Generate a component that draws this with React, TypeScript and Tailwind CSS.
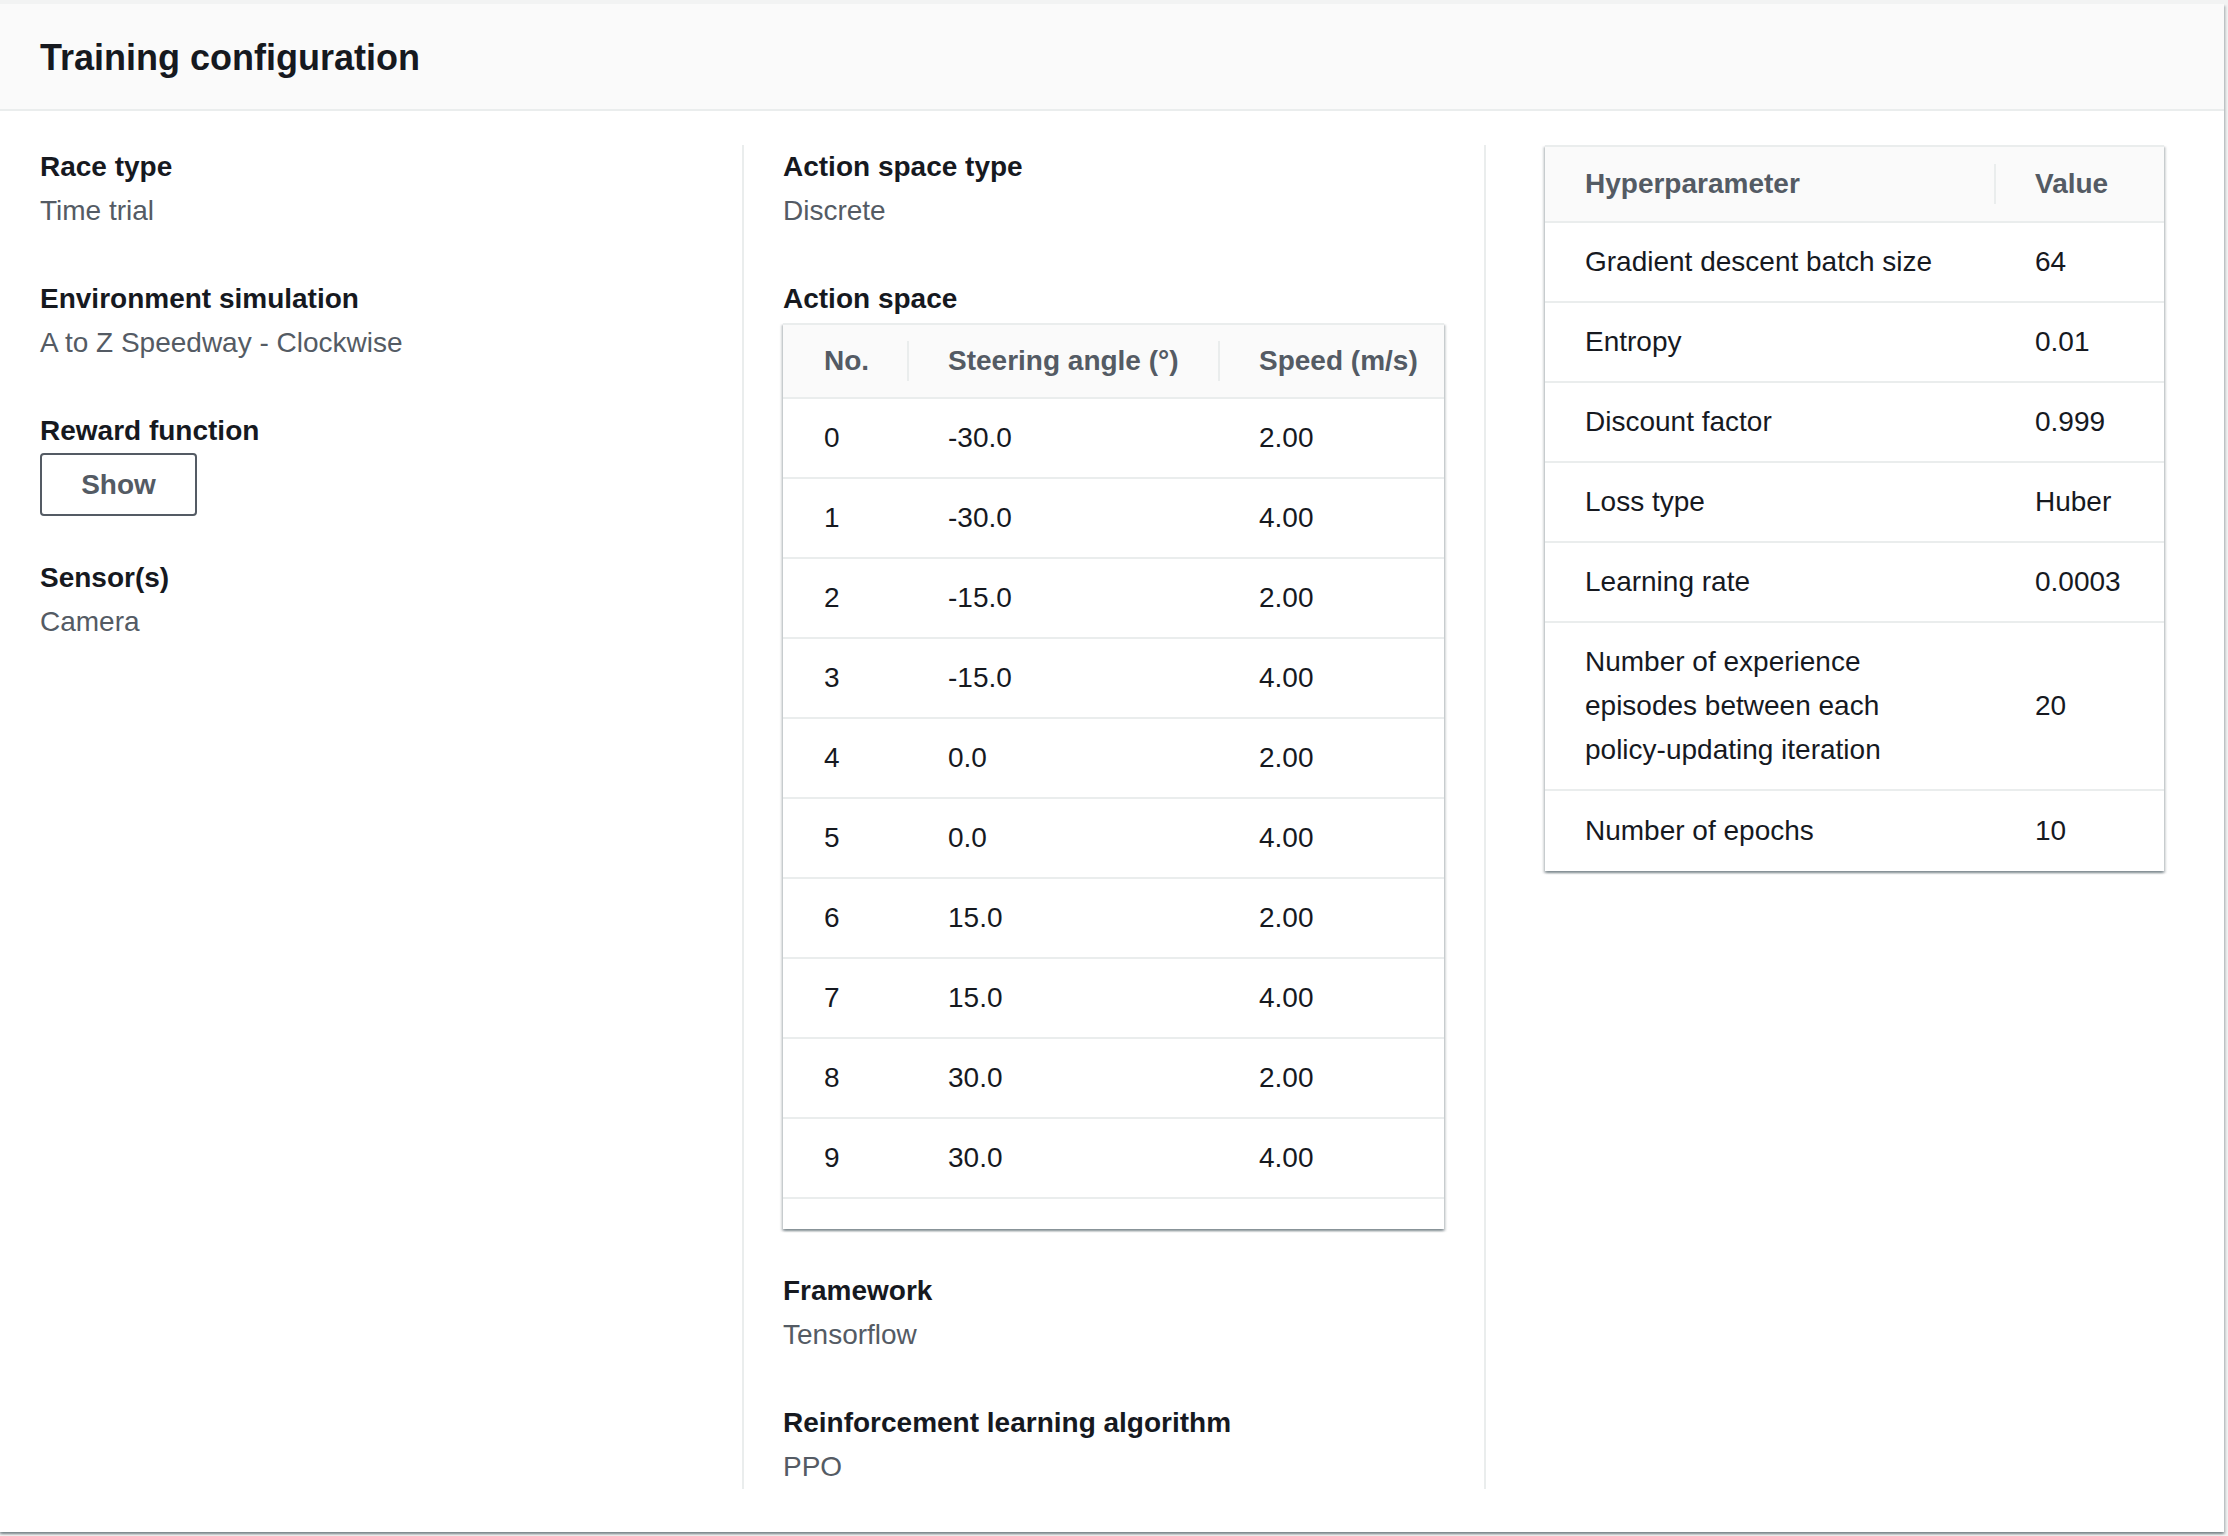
import React from 'react';

const FONT = { fontFamily: '"Liberation Sans", Arial, sans-serif' };

const actions = [
  ['0', '-30.0', '2.00'],
  ['1', '-30.0', '4.00'],
  ['2', '-15.0', '2.00'],
  ['3', '-15.0', '4.00'],
  ['4', '0.0', '2.00'],
  ['5', '0.0', '4.00'],
  ['6', '15.0', '2.00'],
  ['7', '15.0', '4.00'],
  ['8', '30.0', '2.00'],
  ['9', '30.0', '4.00'],
];

const hyper = [
  ['Gradient descent batch size', '64'],
  ['Entropy', '0.01'],
  ['Discount factor', '0.999'],
  ['Loss type', 'Huber'],
  ['Learning rate', '0.0003'],
  ['Number of experience episodes between each policy-updating iteration', '20'],
  ['Number of epochs', '10'],
];

const tableShadow =
  'border-t-2 border-[#eaeded] bg-white shadow-[0_2px_2px_0_rgba(0,28,36,0.3),2px_2px_2px_0_rgba(0,28,36,0.15),-2px_2px_2px_0_rgba(0,28,36,0.15)]';

function KeyValue({ label, value, className = '' }: { label: string; value: string; className?: string }) {
  return (
    <div className={className}>
      <div className="font-bold leading-[44px] text-[#16191f]">{label}</div>
      <div className="leading-[44px] text-[#545b64]">{value}</div>
    </div>
  );
}

function HeaderDivider() {
  return <span className="mr-[39px] h-[40px] w-[2px] shrink-0 bg-[#eaeded]" />;
}

function ActionTable() {
  return (
    <div className={`mt-[2px] ${tableShadow}`}>
      <div className="grid h-[74px] grid-cols-[124px_311px_1fr] border-b-2 border-[#eaeded] bg-[#fafafa] font-bold text-[#545b64]">
        <div className="flex items-center pl-[41px]">No.</div>
        <div className="flex items-center">
          <HeaderDivider />
          Steering angle (°)
        </div>
        <div className="flex items-center">
          <HeaderDivider />
          Speed (m/s)
        </div>
      </div>
      {actions.map(([no, angle, speed]) => (
        <div key={no} className="grid h-[80px] grid-cols-[124px_311px_1fr] items-center border-b-2 border-[#eaeded] text-[#16191f]">
          <div className="pl-[41px]">{no}</div>
          <div className="pl-[41px]">{angle}</div>
          <div className="pl-[41px]">{speed}</div>
        </div>
      ))}
      <div className="h-[30px]" />
    </div>
  );
}

function HyperTable() {
  return (
    <div className={tableShadow}>
      <div className="grid h-[76px] grid-cols-[449px_1fr] border-b-2 border-[#eaeded] bg-[#fafafa] font-bold text-[#545b64]">
        <div className="flex items-center pl-[40px]">Hyperparameter</div>
        <div className="flex items-center">
          <HeaderDivider />
          Value
        </div>
      </div>
      {hyper.map(([name, value], i) => (
        <div
          key={name}
          className={`grid grid-cols-[449px_1fr] items-center leading-[44px] text-[#16191f] ${
            i < hyper.length - 1 ? 'border-b-2 border-[#eaeded] py-[17px]' : 'py-[18px]'
          }`}
        >
          <div className="pl-[40px] pr-[40px]">{name}</div>
          <div className="pl-[41px]">{value}</div>
        </div>
      ))}
    </div>
  );
}

export default function App() {
  return (
    <div className="min-h-screen w-[2228px] bg-[#f2f3f3] pt-[4px] text-[28px]" style={FONT}>
      <div className="w-[2224px] bg-white shadow-[0_2px_2px_0_rgba(0,28,36,0.3),2px_2px_2px_0_rgba(0,28,36,0.15),-2px_2px_2px_0_rgba(0,28,36,0.15)]">
        {/* Header */}
        <div className="flex h-[107px] items-center border-b-2 border-[#eaeded] bg-[#fafafa] px-[40px]">
          <h2 className="pt-[2px] text-[36px] font-bold leading-[44px] text-[#16191f]">Training configuration</h2>
        </div>

        {/* Body: three bordered columns */}
        <div className="grid grid-cols-[742px_742px_740px] pb-[43px] pt-[34px]">
          <div className="pl-[40px] pr-[40px]">
            <KeyValue label="Race type" value="Time trial" className="mb-[44px]" />
            <KeyValue label="Environment simulation" value="A to Z Speedway - Clockwise" className="mb-[44px]" />
            <div className="mb-[40px]">
              <div className="font-bold leading-[44px] text-[#16191f]">Reward function</div>
              <button className="flex h-[63px] w-[157px] items-center justify-center rounded-[4px] border-2 border-[#545b64] bg-white font-bold text-[#545b64]">
                Show
              </button>
            </div>
            <KeyValue label="Sensor(s)" value="Camera" />
          </div>

          <div className="border-l-2 border-[#eaeded] pl-[39px] pr-[40px]">
            <KeyValue label="Action space type" value="Discrete" className="mb-[44px]" />
            <div className="font-bold leading-[44px] text-[#16191f]">Action space</div>
            <ActionTable />
            <KeyValue label="Framework" value="Tensorflow" className="mb-[44px] mt-[40px]" />
            <KeyValue label="Reinforcement learning algorithm" value="PPO" />
          </div>

          <div className="border-l-2 border-[#eaeded] pl-[59px] pr-[60px]">
            <HyperTable />
          </div>
        </div>
      </div>
    </div>
  );
}
